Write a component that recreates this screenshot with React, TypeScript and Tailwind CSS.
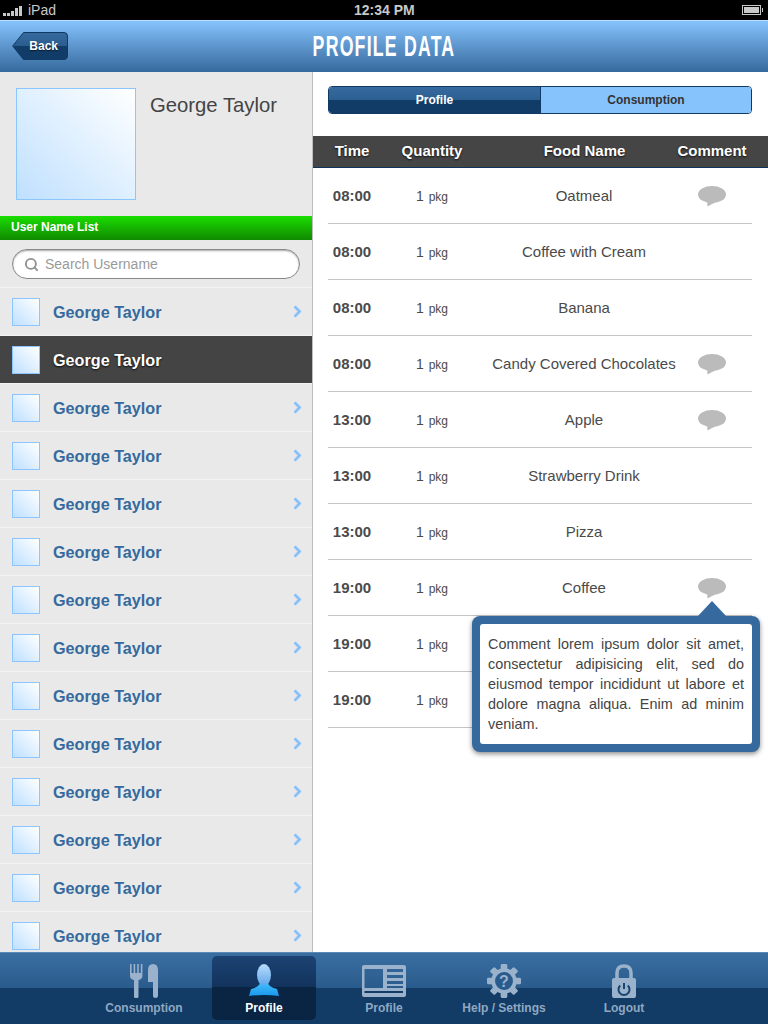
import React from 'react'
import { ChevronRight, Search } from 'lucide-react'

const sans = { fontFamily: '"Liberation Sans", Arial, sans-serif' }

const meals = [
  { time: '08:00', food: 'Oatmeal', comment: true },
  { time: '08:00', food: 'Coffee with Cream', comment: false },
  { time: '08:00', food: 'Banana', comment: false },
  { time: '08:00', food: 'Candy Covered Chocolates', comment: true },
  { time: '13:00', food: 'Apple', comment: true },
  { time: '13:00', food: 'Strawberry Drink', comment: false },
  { time: '13:00', food: 'Pizza', comment: false },
  { time: '19:00', food: 'Coffee', comment: true },
  { time: '19:00', food: '', comment: false },
  { time: '19:00', food: '', comment: false },
]

function Bubble() {
  return (
    <svg width="28" height="21" viewBox="0 0 28 21" fill="#bbbbbb">
      <ellipse cx="14" cy="8.5" rx="14" ry="8.5" />
      <path d="M9 15 L18 16 L9.5 20.5 Z" />
    </svg>
  )
}

function Avatar({ className }: { className: string }) {
  return <div className={`border border-[#8cc6ff] bg-gradient-to-tr from-[#bfe0ff] to-white ${className}`}></div>
}

function StatusBar() {
  return (
    <div className="h-5 bg-black flex items-center justify-between pl-[3px] pr-[5px] relative text-[#c8c8c8]">
      <div className="flex items-center gap-[6px]">
        <div className="flex items-end gap-[1px] h-[11px]">
          <div className="w-[3px] h-[3px] bg-[#c8c8c8]"></div>
          <div className="w-[3px] h-[3px] bg-[#c8c8c8]"></div>
          <div className="w-[3px] h-[5px] bg-[#c8c8c8]"></div>
          <div className="w-[3px] h-[8px] bg-[#c8c8c8]"></div>
          <div className="w-[3px] h-[10px] bg-[#c8c8c8]"></div>
        </div>
        <span className="text-[14px] leading-none">iPad</span>
      </div>
      <span className="absolute left-[354px] top-[3px] text-[14px] leading-none font-bold">12:34 PM</span>
      <div className="flex items-center">
        <div className="w-[19px] h-[10px] border border-[#c8c8c8] p-[1px]">
          <div className="w-full h-full bg-[#c8c8c8]"></div>
        </div>
        <div className="w-[1px] h-[4px] bg-[#c8c8c8] ml-[1px]"></div>
      </div>
    </div>
  )
}

function Header() {
  return (
    <div className="h-[52px] bg-gradient-to-b from-[#86c3fd] to-[#356a9d] border-t border-[#b9deff] relative flex items-center justify-center">
      <div className="absolute left-3 top-[11px] w-[56px] h-[28px] flex items-center justify-end pr-[10px]">
        <svg className="absolute inset-0" width="56" height="28" viewBox="0 0 56 28">
          <defs>
            <linearGradient id="backFill" x1="0" y1="0" x2="0" y2="1">
              <stop offset="0" stopColor="#366a9e" />
              <stop offset="0.5" stopColor="#2a5c8e" />
              <stop offset="0.5" stopColor="#123c68" />
              <stop offset="1" stopColor="#123c68" />
            </linearGradient>
          </defs>
          <path d="M0.7 14 L11.5 0.5 H52 Q55.5 0.5 55.5 4 V24 Q55.5 27.5 52 27.5 H11.5 Z" fill="url(#backFill)" stroke="#0f3a64" />
        </svg>
        <span className="relative text-[12px] font-bold text-white [text-shadow:0_1px_1px_rgba(0,0,0,0.6)]">Back</span>
      </div>
      <span
        className="text-[29px] font-bold text-white leading-none tracking-[2px] scale-x-[0.61] whitespace-nowrap"
        style={{ fontFamily: '"Liberation Sans Narrow", "Liberation Sans", sans-serif' }}
      >
        PROFILE DATA
      </span>
    </div>
  )
}

function UserList() {
  return (
    <div className="w-[313px] shrink-0 bg-[#e9e9e9] border-r border-[#bdbdbd] overflow-hidden">
      <div className="h-[144px] flex pl-4 pt-4 gap-[14px]">
        <Avatar className="w-[120px] h-[112px]" />
        <span className="text-[20.3px] text-[#444] leading-none mt-[7px]">George Taylor</span>
      </div>
      <div className="h-6 bg-gradient-to-b from-[#1ade00] to-[#108a00] flex items-center pl-[11px] pb-[2px]">
        <span className="text-[12px] font-bold text-white">User Name List</span>
      </div>
      <div className="h-[48px] px-3 pt-[9px] border-b border-[#f3f3f3]">
        <div className="h-[30px] rounded-full bg-white border border-[#8a8a8a] shadow-[inset_0_1px_2px_rgba(0,0,0,0.35)] flex items-center pl-[11px] gap-[6px]">
          <Search size={15} strokeWidth={3} className="text-[#8f8f8f]" />
          <span className="text-[14px] text-[#9a9a9a]">Search Username</span>
        </div>
      </div>
      {Array(14).fill(0).map((_, i) => (
        <div
          key={i}
          className={`h-[48px] flex items-center pl-3 pr-[6px] gap-[13px] border-b border-[#f3f3f3] ${i === 1 ? 'bg-[#444444]' : ''}`}
        >
          <Avatar className="w-[28px] h-[28px]" />
          <span className={`text-[16.2px] font-bold flex-1 pt-[2px] ${i === 1 ? 'text-white [text-shadow:0_1px_2px_rgba(0,0,0,0.9)]' : 'text-[#366a9e]'}`}>
            George Taylor
          </span>
          {i !== 1 && <ChevronRight size={17} strokeWidth={4} className="text-[#85c1fb]" />}
        </div>
      ))}
    </div>
  )
}

function MealTable() {
  return (
    <div className="flex-1 bg-white relative overflow-hidden">
      <div className="ml-[15px] mr-4 mt-[14px] h-[28px] flex rounded-[4px] border border-[#0f3a64] overflow-hidden text-[12px] font-bold">
        <div className="w-[211px] bg-[linear-gradient(#366a9e,#2c5f91_50%,#123c68_50%)] text-white flex items-center justify-center">Profile</div>
        <div className="flex-1 bg-[#86c3fd] border-l border-[#0f3a64] text-[#333] flex items-center justify-center">Consumption</div>
      </div>
      <div className="mt-[22px] h-8 bg-[#454545] border-b border-[#10335a] pl-[15px] grid grid-cols-[48px_112px_192px_72px] items-center text-[15px] font-bold text-white [text-shadow:0_1px_2px_rgba(0,0,0,0.8)]">
        <div className="text-center">Time</div>
        <div className="text-center">Quantity</div>
        <div className="text-center pl-[1px]">Food Name</div>
        <div className="pr-2 flex justify-center whitespace-nowrap">Comment</div>
      </div>
      <div className="ml-[15px] mr-4">
        {meals.map((m, i) => (
          <div key={i} className="h-[56px] border-b border-[#c4c4c4] grid grid-cols-[48px_112px_192px_72px] items-center text-[#4a4a4a]">
            <div className="text-center text-[15px] font-bold pt-[2px] whitespace-nowrap">{m.time}</div>
            <div className="text-center text-[14px] pt-[2px]">1 <span className="text-[12px] ml-[1px]">pkg</span></div>
            <div className="text-center text-[15px] whitespace-nowrap pt-[2px]">{m.food}</div>
            <div className="pr-2 flex justify-center pt-[1px]">{m.comment && <Bubble />}</div>
          </div>
        ))}
      </div>
      {/* comment popover */}
      <div className="absolute left-[159px] top-[544px] w-[288px] rounded-[8px] bg-[#366a9e] p-2 shadow-[0_2px_5px_rgba(0,0,0,0.45)]">
        <svg className="absolute left-[216px] -top-[16px]" width="48" height="17" viewBox="0 0 48 17" fill="#366a9e">
          <path d="M9 17 L24 1 L39 17 Z" />
        </svg>
        <p className="bg-white rounded-[3px] px-2 py-[10px] text-[14.4px] leading-[20px] text-[#444] text-justify">
          Comment lorem ipsum dolor sit amet, consectetur adipisicing elit, sed do eiusmod tempor incididunt ut labore et dolore magna aliqua. Enim ad minim veniam.
        </p>
      </div>
    </div>
  )
}

const tabIcon = '#9ab2cb'

function Tab({ label, active, children }: { label: string; active?: boolean; children: React.ReactNode }) {
  return (
    <div className={`w-[104px] h-[64px] mx-2 rounded-[5px] flex flex-col items-center justify-end pb-[4px] ${active ? 'bg-[linear-gradient(#1c4373,#12335c_48%,#0a2444_48%)] text-white' : 'text-[#8fa8c2]'}`}>
      <div className="h-[36px] flex items-center justify-center">{children}</div>
      <span className="text-[12px] font-bold leading-[16px] whitespace-nowrap mt-[1px]">{label}</span>
    </div>
  )
}

function TabBar() {
  return (
    <div className="h-[72px] border-t border-[#5b8ab8] pb-[1px] bg-[linear-gradient(#3a6ea1,#2a5b8d_49%,#123b65_49%)] flex justify-center items-center">
      <Tab label="Consumption">
        <svg width="30" height="34" viewBox="0 0 30 34" fill={tabIcon}>
          <path d="M1 0 H2.6 V9 H4.6 V0 H6.2 V9 H8.2 V0 H9.8 V9 H11.8 V0 H13.4 V12 Q13.4 15 9.5 16 V33 Q9.5 34 8 34 H6.5 Q5 34 5 33 V16 Q1 15 1 12 Z" />
          <path d="M19 6 Q19 0 24 0 Q29 0 29 6 V32 Q29 34 26.5 34 Q24 34 24 32 V18 H19 Z" />
        </svg>
      </Tab>
      <Tab label="Profile" active>
        <svg width="32" height="34" viewBox="0 0 32 34">
          <defs>
            <linearGradient id="head" x1="0" y1="0" x2="0" y2="1">
              <stop offset="0" stopColor="#b9dcfc" />
              <stop offset="1" stopColor="#5ea6ea" />
            </linearGradient>
            <linearGradient id="body" x1="0" y1="0" x2="0" y2="1">
              <stop offset="0" stopColor="#45bcfb" />
              <stop offset="1" stopColor="#1698ee" />
            </linearGradient>
          </defs>
          <ellipse cx="16" cy="11" rx="7" ry="11" fill="url(#head)" />
          <path d="M12 19 Q16 23 20 19 Q21 23 29 25 L31 32 Q16 30 1 32 L3 25 Q11 23 12 19 Z" fill="url(#body)" />
        </svg>
      </Tab>
      <Tab label="Profile">
        <svg width="44" height="32" viewBox="0 0 44 32" fill={tabIcon}>
          <path fillRule="evenodd" d="M2 0 H42 Q44 0 44 2 V30 Q44 32 42 32 H2 Q0 32 0 30 V2 Q0 0 2 0 Z M2.5 4 V23 H21 V4 Z M25 4 V7 H41 V4 Z M25 10 V13 H41 V10 Z M25 16 V19 H41 V16 Z M25 21 V23 H41 V21 Z M2.5 26 V28 H41 V26 Z" />
        </svg>
      </Tab>
      <Tab label="Help / Settings">
        <svg width="34" height="34" viewBox="0 0 36 36">
          <g fill={tabIcon}>
            <rect x="14.5" y="0" width="7" height="36" rx="1.5" />
            <rect x="14.5" y="0" width="7" height="36" rx="1.5" transform="rotate(45 18 18)" />
            <rect x="14.5" y="0" width="7" height="36" rx="1.5" transform="rotate(90 18 18)" />
            <rect x="14.5" y="0" width="7" height="36" rx="1.5" transform="rotate(135 18 18)" />
          </g>
          <circle cx="18" cy="18" r="11.5" fill="#2a5b8d" stroke={tabIcon} strokeWidth="4" />
          <text x="18" y="24" textAnchor="middle" fontSize="17" fontWeight="bold" fill={tabIcon} style={sans}>?</text>
        </svg>
      </Tab>
      <Tab label="Logout">
        <svg width="24" height="34" viewBox="0 0 24 34">
          <path d="M5 15 V9 Q5 2 12 2 Q19 2 19 9 V15" fill="none" stroke={tabIcon} strokeWidth="3.5" />
          <rect x="0" y="14" width="24" height="20" rx="2" fill={tabIcon} />
          <path d="M8.2 21.5 A5.5 5.5 0 1 0 15.8 21.5" fill="none" stroke="#174570" strokeWidth="2" />
          <path d="M12 19 V25" stroke="#174570" strokeWidth="2" />
        </svg>
      </Tab>
    </div>
  )
}

export default function App() {
  return (
    <div className="w-[768px] h-[1024px] flex flex-col overflow-hidden bg-white" style={sans}>
      <StatusBar />
      <Header />
      <div className="flex flex-1 min-h-0">
        <UserList />
        <MealTable />
      </div>
      <TabBar />
    </div>
  )
}
